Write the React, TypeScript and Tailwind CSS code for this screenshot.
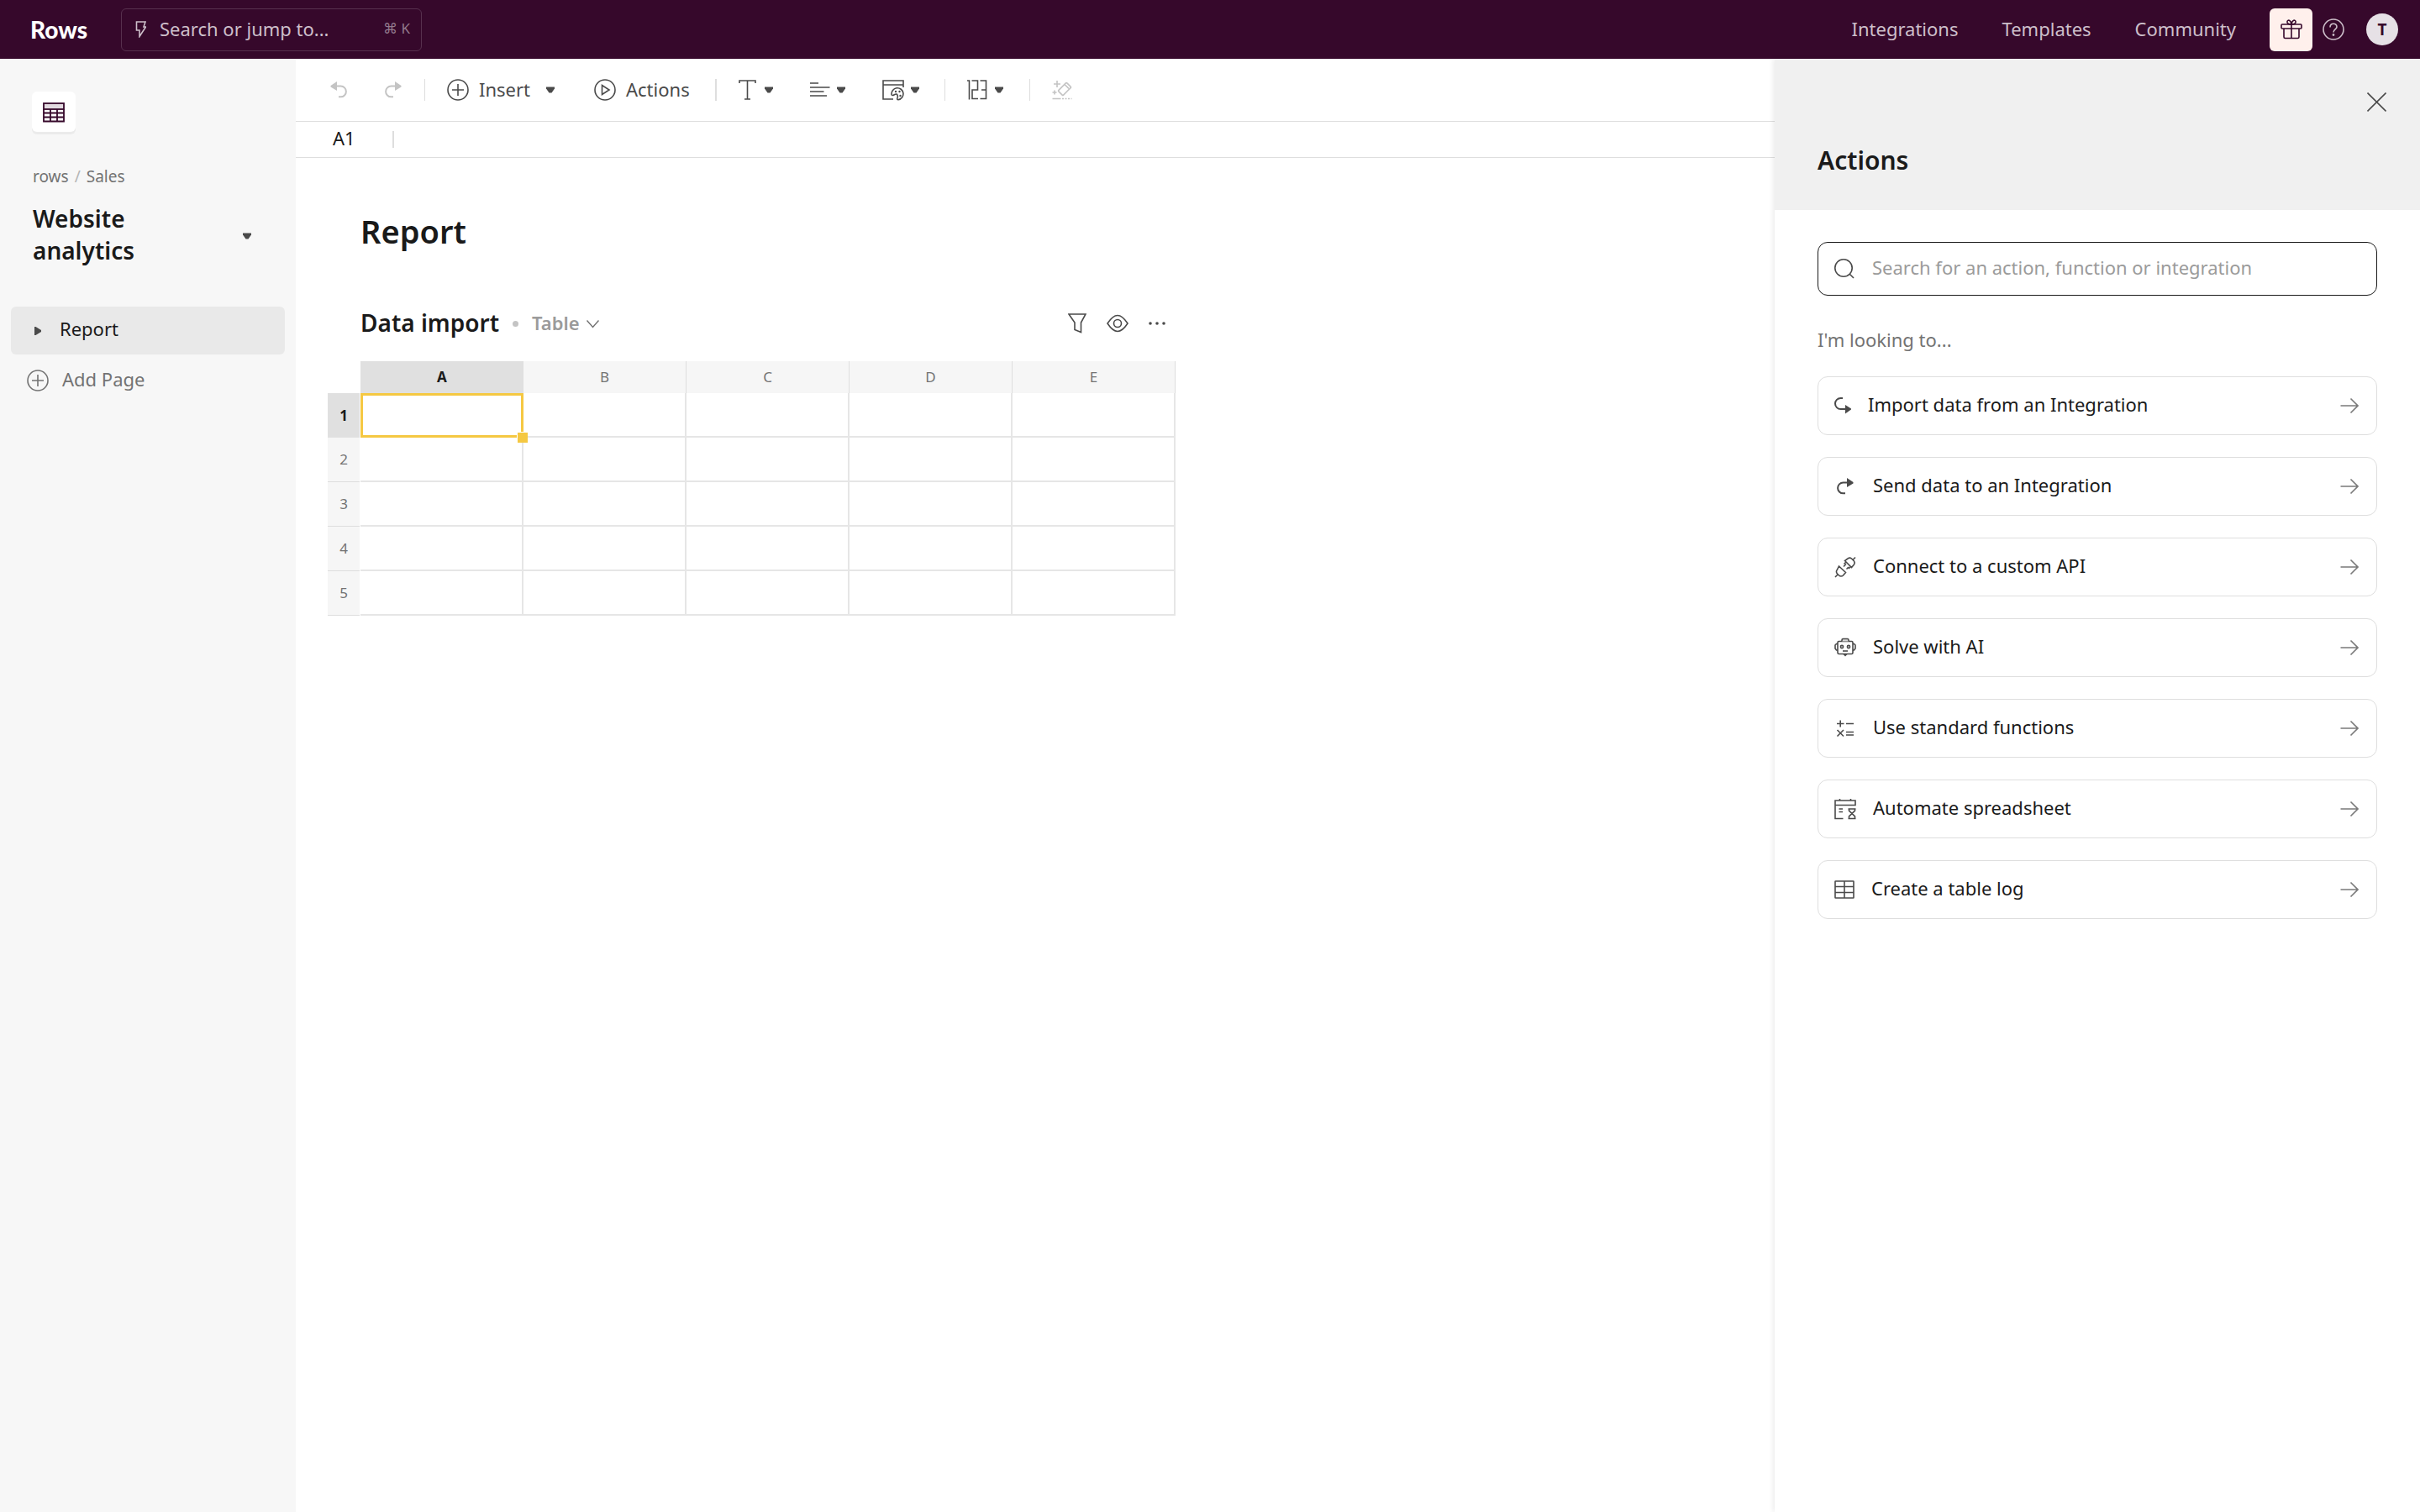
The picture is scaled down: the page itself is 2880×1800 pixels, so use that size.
import type { ReactNode } from "react";

type IconProps = { w: number; h: number; sw?: number; className?: string; children: ReactNode };

const Icon = ({ w, h, sw = 1.6, className = "", children }: IconProps) => (
  <svg
    width={w}
    height={h}
    viewBox={`0 0 ${w} ${h}`}
    fill="none"
    stroke="currentColor"
    strokeWidth={sw}
    className={`shrink-0 ${className}`}
    aria-hidden="true"
  >
    {children}
  </svg>
);

const Caret = ({ className = "" }: { className?: string }) => (
  <Icon w={10} h={8} className={`text-[#4a4a4a] ${className}`}>
    <path d="M0 0.5h10v2L6.500 7.500h-3L0 2.500z" fill="currentColor" stroke="none" />
  </Icon>
);

const RedoShape = () => (
  <>
    <path d="M14 6.5H8.5a6.3 6.3 0 0 0 0 12.8H11" strokeWidth="2" />
    <path d="M13 1l7.5 5v1.4L13 12z" fill="currentColor" stroke="none" />
  </>
);

const Redo = ({ className = "" }: { className?: string }) => (
  <Icon w={22} h={22} className={className}>
    <RedoShape />
  </Icon>
);

const Undo = () => (
  <Icon w={22} h={22}>
    <g transform="translate(21 0) scale(-1 1)">
      <RedoShape />
    </g>
  </Icon>
);

const CirclePlus = () => (
  <Icon w={26} h={26}>
    <circle cx="13" cy="13" r="12" />
    <path d="M13 6v14M6 13h14" />
  </Icon>
);

const Arrow = () => (
  <Icon w={22} h={20} className="ml-auto text-[#7a7a7a]">
    <path d="M0.5 10H21M12.5 1.5L21 10l-8.5 8.5" />
  </Icon>
);

const Divider = ({ className = "w-px" }: { className?: string }) => (
  <div className={`mx-[26px] h-[26px] shrink-0 bg-[#dedede] ${className}`} />
);

const actions = [
  {
    label: "Import data from an Integration",
    icon: (
      <Icon w={20} h={22}>
        <path d="M10 2H7.500a6 6 0 0 0 0 13H14" strokeWidth="2" />
        <path d="M13 10l7 4.500v1L13 20.500z" fill="currentColor" stroke="none" />
      </Icon>
    ),
  },
  {
    label: "Send data to an Integration",
    icon: (
      <Icon w={26} h={22}>
        <g transform="translate(2 0)">
          <RedoShape />
        </g>
      </Icon>
    ),
  },
  {
    label: "Connect to a custom API",
    icon: (
      <Icon w={26} h={26}>
        <path d="M5.500 12l8 7.500-3 3.500a3.500 3.500 0 0 1-5 0l-2-2a3.500 3.500 0 0 1 0-5zM4 22l-3 3" />
        <path d="M12.500 5.500l8 8 3-3.500a3.500 3.500 0 0 0 0-4l-3-3a3.500 3.500 0 0 0-4.500 0zM22.500 4L25 1.500" />
        <path d="M14 7l-2.500 2.500M19.500 12.500L17 15M14 9.500l-3 3M17 13l-2.500 2.500" />
      </Icon>
    ),
  },
  {
    label: "Solve with AI",
    icon: (
      <Icon w={26} h={24}>
        <rect x="4" y="4.500" width="18" height="15" rx="1.500" />
        <path d="M9 4.500V3a1.500 1.500 0 0 1 1.500-1.500h5A1.500 1.500 0 0 1 17 3v1.500" fill="#d8d8d8" />
        <path d="M4 7.500H2.500L1 9v4l1.500 2H4M22 7.500h1.500L25 9v4l-1.500 2H22" />
        <circle cx="9" cy="11" r="1.600" />
        <circle cx="17" cy="11" r="1.600" />
        <path d="M10 16h6" />
        <path d="M10.500 20h5L13 22.500z" fill="currentColor" stroke="none" />
      </Icon>
    ),
  },
  {
    label: "Use standard functions",
    icon: (
      <Icon w={26} h={22}>
        <path d="M3 5.500h8.500M7.200 1.500v8M14 5.500h9M3.500 13l7.500 7.500M11 13l-7.500 7.500M14 15.500h9M14 19h9" />
      </Icon>
    ),
  },
  {
    label: "Automate spreadsheet",
    icon: (
      <Icon w={26} h={26}>
        <path d="M10.500 24.500H1V3h24v5.500H1M6.500 1v2M19.500 1v2M5.500 13H10M5.500 16.500H10" />
        <path d="M16.500 13h9M16.500 24.500h9M17.500 13v2.200l7 6.600v2.700M24.500 13v2.200l-7 6.600v2.700" />
      </Icon>
    ),
  },
  {
    label: "Create a table log",
    icon: (
      <Icon w={24} h={22}>
        <rect x="1" y="1" width="22" height="20" rx="0.500" />
        <path d="M1 7.500h22M1 14.500h22M12 1v20" />
      </Icon>
    ),
  },
];

const columns = ["A", "B", "C", "D", "E"];
const rows = [1, 2, 3, 4, 5];

const Header = () => (
  <header className="flex h-[70px] shrink-0 items-center bg-[#36082b] pl-9 pr-[26px] text-[#cdbfca]">
    <a href="#" className="w-[108px] font-['Lato',sans-serif] text-[28px] leading-8 font-black text-white">
      Rows
    </a>
    <button className="flex h-[51px] w-[358px] items-center rounded-md border border-[#57304e] pl-4 pr-[13px]">
      <Icon w={13} h={20}>
        <path d="M1.500 1h10.500l-2 6h2.500L5 18.500V11H1.500z" />
      </Icon>
      <span className="ml-4 pb-0.5">Search or jump to...</span>
      <span className="ml-auto pb-0.5 text-[17px] text-[#927a8d]">⌘ K</span>
    </button>
    <nav className="ml-auto flex gap-[52px] pb-0.5">
      <a href="#">Integrations</a>
      <a href="#">Templates</a>
      <a href="#">Community</a>
    </nav>
    <button aria-label="Gifts" className="ml-10 flex size-[51px] items-center justify-center rounded-md bg-[#fff0ec] text-[#36082b]">
      <Icon w={26} h={24}>
        <rect x="1" y="6" width="24" height="5" rx="1" />
        <path d="M4 11v10a1.500 1.500 0 0 0 1.500 1.500h15a1.500 1.500 0 0 0 1.500-1.500V11M13 6v16.500" />
        <path d="M13 6C9 6 7.500 4.500 8 2.500S12 0 13 6c1-6 4.500-5.500 5-3.500S17 6 13 6z" />
      </Icon>
    </button>
    <button aria-label="Help" className="ml-3">
      <Icon w={26} h={26}>
        <circle cx="13" cy="13" r="12" />
        <path d="M9 10.500c0-5.500 8-5.500 8-0.500 0 3-4 3-4 6.500" />
        <circle cx="13" cy="19.500" r="0.600" />
      </Icon>
    </button>
    <button className="ml-[26px] size-[38px] rounded-full bg-[#e6e1e6] text-[19px] leading-[38px] font-bold text-[#36082b]">T</button>
  </header>
);

const Sidebar = () => (
  <aside className="flex w-[352px] shrink-0 flex-col bg-[#f7f7f7] px-[13px] pt-[39px] text-[#737373]">
    <div className="ml-[25px] flex h-12 w-[52px] items-center justify-center rounded-md bg-white pt-0.5 text-[#36082b] shadow-[0_3px_0_#ebebeb]">
      <Icon w={26} h={24} sw={1.8}>
        <rect x="1" y="1" width="24" height="7" fill="#e2dae0" />
        <path d="M1 8v14.500h24V8M1 12.500h24M1 17.500h24M9 8v14.500M17 8v14.500" />
      </Icon>
    </div>
    <div className="mt-10 ml-[26px] flex gap-[7px] text-[19px] leading-[26px]">
      <a href="#">rows</a>
      <span className="text-[#b5b5b5]">/</span>
      <a href="#">Sales</a>
    </div>
    <button className="mt-[18px] ml-[26px] flex items-center text-left text-[28px] leading-[38px] font-semibold text-[#1a1a1a]">
      <span className="w-[200px]">Website analytics</span>
      <Caret className="mt-1 ml-[50px]" />
    </button>
    <button className="mt-12 flex h-[57px] items-center rounded-md bg-[#e9e9e9] pl-7 text-[#1a1a1a]">
      <Icon w={8} h={10} className="text-[#4a4a4a]">
        <path d="M0 0h1.500L8 4v2l-6.500 4H0z" fill="currentColor" stroke="none" />
      </Icon>
      <span className="ml-[22px] pb-1.5">Report</span>
    </button>
    <button className="mt-4 flex h-[30px] items-center gap-4 pl-[19px]">
      <CirclePlus />
      <span className="pb-1">Add Page</span>
    </button>
  </aside>
);

const Toolbar = () => (
  <div className="flex h-[75px] items-center border-b border-[#dedede] pt-1 pb-1 pl-[41px] text-[#4a4a4a]">
    <div className="flex gap-[42px] text-[#c4c4c4]">
      <button aria-label="Undo"><Undo /></button>
      <button aria-label="Redo"><Redo /></button>
    </div>
    <Divider />
    <button className="flex w-[128px] items-center gap-3">
      <CirclePlus />
      <span className="pb-0.5">Insert</span>
      <Caret className="ml-auto" />
    </button>
    <button className="ml-[47px] flex w-[118px] items-center gap-3">
      <Icon w={26} h={26}>
        <circle cx="13" cy="13" r="12" />
        <path d="M9.500 7.500v11l8.500-5.500z" />
      </Icon>
      <span className="pb-0.5">Actions</span>
    </button>
    <Divider className="w-0.5" />
    <div className="flex gap-[44px]">
      <button aria-label="Text style" className="flex w-[41px] items-center justify-between">
        <Icon w={21} h={26}>
          <path d="M1 5V2h19v3M10.500 2v22M7 24h7" />
        </Icon>
        <Caret />
      </button>
      <button aria-label="Align" className="flex w-[42px] items-center justify-between">
        <Icon w={24} h={22}>
          <path d="M0 3h10M0 8h23.500M0 13h16.500M0 18h20" />
        </Icon>
        <Caret />
      </button>
      <button aria-label="Cell color" className="flex w-[48px] items-center gap-2">
        <Icon w={26} h={26}>
          <path d="M13 24H1V2h24v8M1 7h24" />
          <path d="M11 18.500a7 7 0 1 1 8 6.200c-1.500 0-1.500-1-1-2.200 0.500-1.500 0.500-3.500-1-4.500-2-0.500-3 1.500-4.500 1.500-1 0-1.500-0.500-1.500-1z" />
          <g fill="currentColor" stroke="none">
            <circle cx="16" cy="15" r="1.200" />
            <circle cx="20.500" cy="15" r="1.200" />
            <circle cx="21.500" cy="20" r="1.200" />
          </g>
        </Icon>
        <Caret />
      </button>
    </div>
    <Divider />
    <button aria-label="Number format" className="flex w-[48px] items-center gap-[9px]">
      <Icon w={24} h={26}>
        <path d="M0 2h2.500v22.500M5.500 2h7v11H6v10.500h7M15.500 2h7v21.500h-7M17 13h5.500" />
      </Icon>
      <Caret />
    </button>
    <Divider />
    <button aria-label="Clear formatting" className="text-[#c4c4c4]">
      <Icon w={24} h={26}>
        <rect x="8" y="8" width="14" height="8" rx="1" transform="rotate(-45 15 12)" />
        <path d="M15 6.500l5 5M6 2v8M2 6h8M3 13.500v5M0.500 16h5M0.500 23.500H10.500" />
        <path d="M12 23.500h11.500" strokeDasharray="2 1.500" />
      </Icon>
    </button>
  </div>
);

const Spreadsheet = () => (
  <section className="mt-[59px] w-[1009px]">
    <div className="flex h-[52px] items-center pr-3 pl-[39px]">
      <h2 className="pb-0.5 text-[28px] leading-9 font-semibold">Data import</h2>
      <span className="ml-4 size-[7px] rounded-full bg-[#c4c4c4]" />
      <button className="ml-4 flex items-center gap-2 pb-0.5 font-semibold text-[#9b9b9b]">
        Table
        <Icon w={15} h={10} sw={1.4} className="mt-1 text-[#707070]">
          <path d="M0.500 0.500l7 8 7-8" />
        </Icon>
      </button>
      <div className="ml-auto flex items-center gap-6 text-[#4a4a4a]">
        <button aria-label="Filter">
          <Icon w={22} h={26}>
            <path d="M1 2h20l-5.500 10v11.500L8 20.500V12z" />
          </Icon>
        </button>
        <button aria-label="Visibility">
          <Icon w={26} h={22}>
            <path d="M1 11C5 5 8.500 1.500 13 1.500S21 5 25 11c-4 6-7.500 9.500-12 9.500S5 17 1 11z" />
            <circle cx="13" cy="11" r="4.500" />
          </Icon>
        </button>
        <button aria-label="More">
          <Icon w={20} h={4}>
            <g fill="currentColor" stroke="none">
              <circle cx="2" cy="2" r="1.800" />
              <circle cx="10" cy="2" r="1.800" />
              <circle cx="18" cy="2" r="1.800" />
            </g>
          </Icon>
        </button>
      </div>
    </div>
    <table className="mt-[19px] w-full table-fixed border-separate border-spacing-0 text-[17px] leading-6">
      <thead>
        <tr className="h-[38px]">
          <td className="w-[39px]" />
          {columns.map((c) => (
            <th
              key={c}
              scope="col"
              className={
                c === "A"
                  ? "bg-[#e0e0e0] font-bold"
                  : "border-r border-[#dedede] bg-[#f6f6f6] font-normal text-[#737373]"
              }
            >
              {c}
            </th>
          ))}
        </tr>
      </thead>
      <tbody>
        {rows.map((r) => (
          <tr key={r} className="h-[53px]">
            <th scope="row" className="border-r border-white p-0">
              <div
                className={
                  r === 1
                    ? "flex h-[53px] items-center justify-center bg-[#e0e0e0] font-bold"
                    : "flex h-[53px] items-center justify-center border-b border-[#dedede] bg-[#f6f6f6] font-normal text-[#737373]"
                }
              >
                {r}
              </div>
            </th>
            {columns.map((c) =>
              r === 1 && c === "A" ? (
                <td key={c} className="relative border-[3px] border-[#f5c842]">
                  <span className="absolute -right-2 -bottom-[9px] z-10 size-[13px] border-t border-l border-white bg-[#f5c842]" />
                </td>
              ) : (
                <td key={c} className="border-r-2 border-b-2 border-[#e6e6e6]" />
              )
            )}
          </tr>
        ))}
      </tbody>
    </table>
  </section>
);

const ActionsPanel = () => (
  <aside className="z-10 w-[768px] shrink-0 bg-white shadow-[-2px_0_6px_rgba(0,0,0,0.08)]">
    <div className="flex h-[180px] flex-col bg-[#f0f0f0] pr-10 pl-[51px]">
      <button aria-label="Close" className="mt-10 self-end text-[#4a4a4a]">
        <Icon w={23} h={24}>
          <path d="M0.500 0.500l22 22M22.500 0.500l-22 22" />
        </Icon>
      </button>
      <h2 className="mt-[37px] text-[30px] leading-10 font-semibold">Actions</h2>
    </div>
    <div className="px-[51px] pt-[38px]">
      <label className="flex h-16 items-center gap-[21px] rounded-xl border border-[#1a1a1a] pl-[19px] text-[#4a4a4a]">
        <Icon w={24} h={24}>
          <circle cx="11" cy="11" r="10.200" />
          <path d="M18 18l5 5" />
        </Icon>
        <input
          type="text"
          aria-label="Search actions"
          placeholder="Search for an action, function or integration"
          className="min-w-0 flex-1 pb-1 outline-none placeholder:text-[#9b9b9b]"
        />
      </label>
      <p className="mt-[38px] text-[#737373]">I'm looking to...</p>
      <div className="mt-[30px] flex flex-col gap-[26px]">
        {actions.map((action) => (
          <button
            key={action.label}
            className="flex h-[70px] items-center gap-5 rounded-xl border border-[#dedede] pr-[21px] pl-[19px] text-[#4a4a4a]"
          >
            {action.icon}
            <span className="pb-1 text-[#1a1a1a]">{action.label}</span>
            <Arrow />
          </button>
        ))}
      </div>
    </div>
  </aside>
);

const App = () => (
  <div className="flex min-h-screen flex-col bg-white font-['Noto_Sans',sans-serif] text-[22px] leading-7 text-[#1a1a1a]">
    <Header />
    <div className="flex flex-1">
      <Sidebar />
      <main className="min-w-0 flex-1">
        <Toolbar />
        <div className="flex h-[43px] items-center border-b border-[#dedede] pl-[44px]">
          <label htmlFor="formula" className="w-[71px] pb-1">A1</label>
          <div className="h-5 w-0.5 bg-[#dedede]" />
          <input id="formula" type="text" className="ml-4 min-w-0 flex-1 outline-none" />
        </div>
        <div className="pt-[62px] pl-[38px]">
          <h1 className="pl-[39px] text-[38px] leading-[50px] font-semibold">Report</h1>
          <Spreadsheet />
        </div>
      </main>
      <ActionsPanel />
    </div>
  </div>
);

export default App;
